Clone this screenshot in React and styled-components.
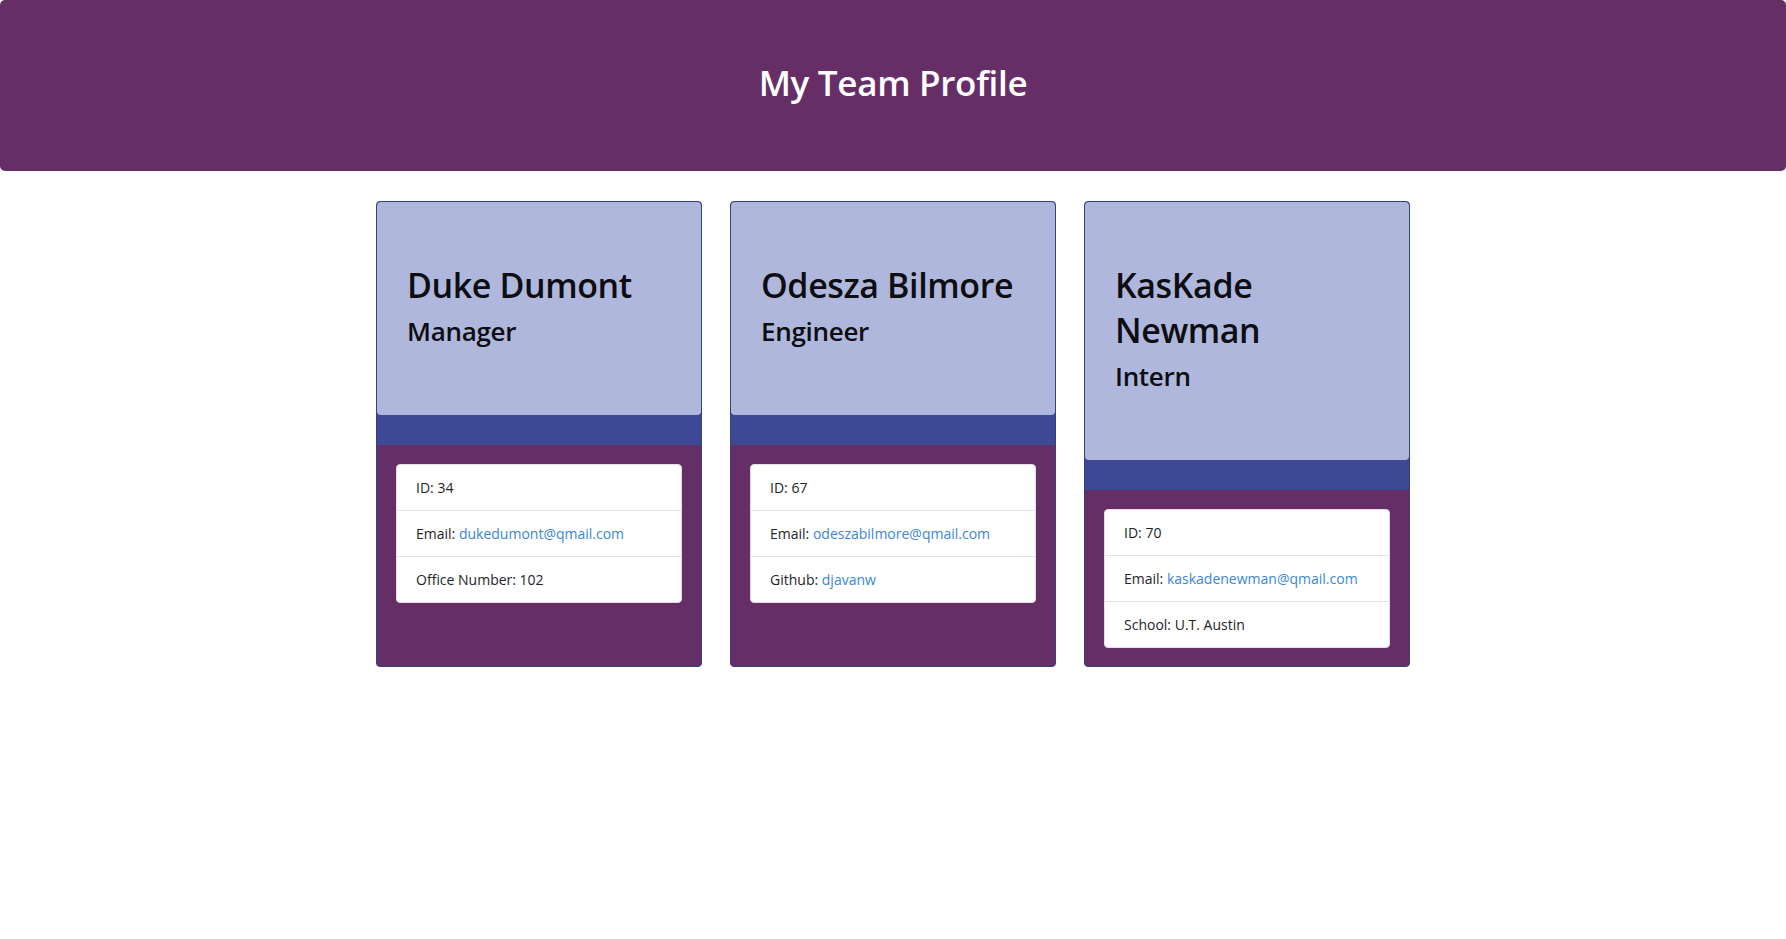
import React from "react";
import styled, { createGlobalStyle } from "styled-components";

const team = [
  { name: "Duke Dumont", role: "Manager", id: 34, email: "dukedumont@qmail.com", extra: { label: "Office Number", value: "102" } },
  { name: "Odesza Bilmore", role: "Engineer", id: 67, email: "odeszabilmore@qmail.com", extra: { label: "Github", value: "djavanw", link: true } },
  { name: "KasKade Newman", role: "Intern", id: 70, email: "kaskadenewman@qmail.com", extra: { label: "School", value: "U.T. Austin" } },
];

const App = () => {
  return (
    <>
      <GlobalStyle />
      <Jumbotron>
        <Title>My Team Profile</Title>
      </Jumbotron>

      <CardRow>
        {team.map((member) => (
          <Card key={member.id}>
            <CardHeader>
              <Name>{member.name}</Name>
              <Role>{member.role}</Role>
            </CardHeader>
            <Band />
            <CardBody>
              <ListGroup>
                <ListItem>ID: {member.id}</ListItem>
                <ListItem>
                  Email: <Link href={`mailto:${member.email}`}>{member.email}</Link>
                </ListItem>
                <ListItem>
                  {member.extra.label}:{" "}
                  {member.extra.link ? <Link href="#">{member.extra.value}</Link> : member.extra.value}
                </ListItem>
              </ListGroup>
            </CardBody>
          </Card>
        ))}
      </CardRow>
    </>
  );
};
export default App;

const GlobalStyle = createGlobalStyle`
  body {
    margin: 0;
    background: #fff;
    color: #212529;
    font-family: "Open Sans", "Noto Sans", sans-serif;
  }
`;

const Jumbotron = styled.header`
  background: #662e67;
  border-radius: 5px;
  height: 171px;
  display: flex;
  align-items: center;
  justify-content: center;
  margin-bottom: 30px;
`;

const Title = styled.h1`
  margin: 0 0 6px;
  color: #fff;
  font-size: 35px;
  font-weight: 600;
  letter-spacing: -0.3px;
`;

const CardRow = styled.main`
  display: flex;
  justify-content: center;
  align-items: stretch;
  gap: 28px;
`;

const Card = styled.section`
  width: 326px;
  box-sizing: border-box;
  display: flex;
  flex-direction: column;
  background: #3d4994;
  border: 1px solid #37407f;
  border-radius: 4px;
  overflow: hidden;
`;

const CardHeader = styled.div`
  background: #afb8dc;
  border-radius: 4px;
  padding: 61px 20px 67px 30px;
`;

const Name = styled.h2`
  margin: 0 0 6px;
  font-size: 34px;
  line-height: 45px;
  font-weight: 600;
  color: #0d0d12;
  letter-spacing: -0.4px;
`;

const Role = styled.h3`
  margin: 0;
  font-size: 26px;
  line-height: 34px;
  font-weight: 600;
  color: #0d0d12;
  letter-spacing: -0.3px;
`;

const Band = styled.div`
  height: 30px;
  flex-shrink: 0;
`;

const CardBody = styled.div`
  flex: 1;
  background: #662e67;
  padding: 19px 19px 18px;
`;

const ListGroup = styled.ul`
  list-style: none;
  margin: 0;
  padding: 0;
  background: #fff;
  border: 1px solid #e6dcea;
  border-radius: 4px;
`;

const ListItem = styled.li`
  padding: 12px 19px;
  font-size: 14px;
  line-height: 21px;
  color: #212529;

  & + & {
    border-top: 1px solid #e5e5e5;
  }
`;

const Link = styled.a`
  color: #3b86d6;
  text-decoration: none;
`;
